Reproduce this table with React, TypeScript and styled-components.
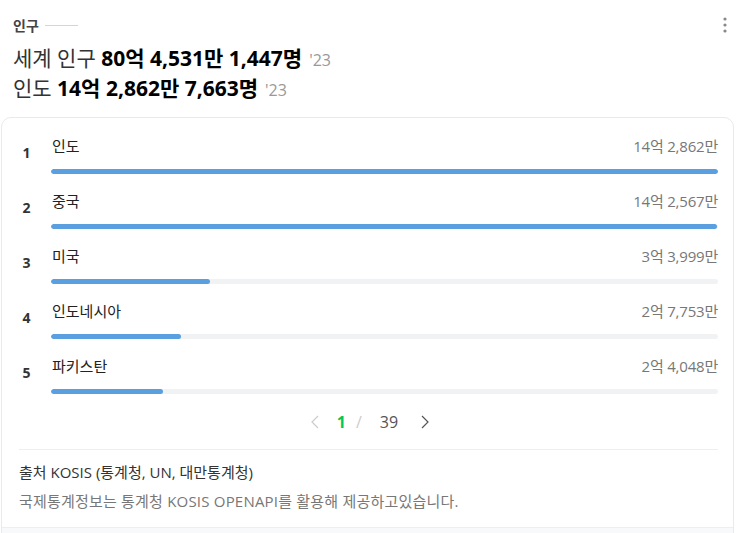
import React from "react";
import styled, { createGlobalStyle } from "styled-components";

const GlobalStyle = createGlobalStyle`
  body {
    margin: 0;
    background: #fff;
    font-family: "Open Sans", "Noto Sans CJK KR", sans-serif;
    color: #222;
  }
`;

const Page = styled.div`
  width: 739px;
  height: 533px;
  overflow: hidden;
  background: #fff;
`;

const Header = styled.div`
  padding: 14px 13px 0 13px;
`;

const TopRow = styled.div`
  display: flex;
  align-items: center;
  justify-content: space-between;
  height: 22px;
`;

const Label = styled.div`
  display: flex;
  align-items: center;
  gap: 6px;
  font-size: 14px;
  font-weight: 700;
  color: #444;

  &::after {
    content: "";
    width: 33px;
    height: 1px;
    background: #d5d5d5;
  }
`;

const MoreButton = styled.button`
  border: 0;
  background: none;
  padding: 0;
  margin-right: -7px;
  width: 16px;
  height: 22px;
  display: flex;
  align-items: center;
  justify-content: center;
`;

const Headline = styled.div`
  margin-top: 7px;
`;

const Line = styled.div`
  display: flex;
  align-items: baseline;
  height: 30px;
  font-size: 21px;
  line-height: 30px;
  color: #333;
  white-space: pre;
`;

const Strong = styled.b`
  font-weight: 700;
  color: #000;
`;

const Year = styled.span`
  font-size: 16px;
  color: #999;
  margin-left: 7px;
`;

const Card = styled.div`
  margin: 14px 0 0 1px;
  width: 733px;
  border: 1px solid #e8eaed;
  border-radius: 10px;
  box-sizing: border-box;
  overflow: hidden;
`;

const List = styled.ol`
  list-style: none;
  margin: 0;
  padding: 18px 15px 0 0;
  display: flex;
  flex-direction: column;
  gap: 17px;
`;

const Row = styled.li`
  display: grid;
  grid-template-columns: 49px 1fr;
`;

const Rank = styled.div`
  text-align: center;
  font-size: 14px;
  font-weight: 700;
  color: #333;
  line-height: 20px;
  padding-top: 7px;
`;

const Info = styled.div`
  display: flex;
  justify-content: space-between;
  font-size: 15px;
  line-height: 20px;
  padding-left: 1px;
`;

const Name = styled.span`
  color: #222;
`;

const Value = styled.span`
  color: #777;
  letter-spacing: -0.2px;
`;

const Track = styled.div`
  margin-top: 13px;
  height: 5px;
  border-radius: 3px;
  background: #f1f2f3;
  overflow: hidden;
`;

const Fill = styled.div`
  height: 100%;
  border-radius: 3px;
  background: #5aa0e1;
`;

const Pager = styled.div`
  margin-top: 16px;
  padding-left: 5px;
  display: flex;
  align-items: center;
  justify-content: center;
  height: 24px;
  font-size: 16px;
`;

const Arrow = styled.button<{ $off?: boolean }>`
  border: 0;
  background: none;
  padding: 0;
  display: flex;
  color: ${(p) => (p.$off ? "#ccc" : "#555")};
`;

const Current = styled.span`
  font-weight: 700;
  color: #03c75a;
  margin-left: 18px;
`;

const Slash = styled.span`
  color: #ccc;
  margin: 0 18px 0 10px;
`;

const Total = styled.span`
  color: #555;
  margin-right: 23px;
`;

const Divider = styled.hr`
  margin: 15px 15px 0 17px;
  border: 0;
  border-top: 1px solid #eceef0;
`;

const Source = styled.div`
  padding: 12px 17px 16px;
  display: flex;
  flex-direction: column;
  gap: 9px;
  font-size: 15px;
  line-height: 20px;
`;

const SourceTitle = styled.div`
  color: #333;
`;

const SourceNote = styled.div`
  color: #777;
  letter-spacing: 0.2px;
`;

const Bottom = styled.div`
  height: 20px;
  border-top: 1px solid #eceef0;
  background: #f8f9fa;
`;

const data = [
  { name: "인도", value: 142862, label: "14억 2,862만" },
  { name: "중국", value: 142567, label: "14억 2,567만" },
  { name: "미국", value: 33999, label: "3억 3,999만" },
  { name: "인도네시아", value: 27753, label: "2억 7,753만" },
  { name: "파키스탄", value: 24048, label: "2억 4,048만" },
];

const max = data[0].value;

const App = () => {
  return (
    <Page>
      <GlobalStyle />
      <Header>
        <TopRow>
          <Label>인구</Label>
          <MoreButton aria-label="더보기">
            <svg width="4" height="16" viewBox="0 0 4 16">
              <circle cx="2" cy="2" r="1.6" fill="#888" />
              <circle cx="2" cy="8" r="1.6" fill="#888" />
              <circle cx="2" cy="14" r="1.6" fill="#888" />
            </svg>
          </MoreButton>
        </TopRow>
        <Headline>
          <Line>
            <span>세계 인구 </span>
            <Strong>80억 4,531만 1,447명</Strong>
            <Year>'23</Year>
          </Line>
          <Line>
            <span>인도 </span>
            <Strong>14억 2,862만 7,663명</Strong>
            <Year>'23</Year>
          </Line>
        </Headline>
      </Header>
      <Card>
        <List>
          {data.map((d, i) => (
            <Row key={d.name}>
              <Rank>{i + 1}</Rank>
              <div>
                <Info>
                  <Name>{d.name}</Name>
                  <Value>{d.label}</Value>
                </Info>
                <Track>
                  <Fill style={{ width: `${(d.value / max) * 100}%` }} />
                </Track>
              </div>
            </Row>
          ))}
        </List>
        <Pager>
          <Arrow $off aria-label="이전">
            <svg width="8" height="14" viewBox="0 0 8 14">
              <path d="M7 1L1 7l6 6" fill="none" stroke="currentColor" strokeWidth="1.2" />
            </svg>
          </Arrow>
          <Current>1</Current>
          <Slash>/</Slash>
          <Total>39</Total>
          <Arrow aria-label="다음">
            <svg width="8" height="14" viewBox="0 0 8 14">
              <path d="M1 1l6 6-6 6" fill="none" stroke="currentColor" strokeWidth="1.2" />
            </svg>
          </Arrow>
        </Pager>
        <Divider />
        <Source>
          <SourceTitle>출처 KOSIS (통계청, UN, 대만통계청)</SourceTitle>
          <SourceNote>국제통계정보는 통계청 KOSIS OPENAPI를 활용해 제공하고있습니다.</SourceNote>
        </Source>
        <Bottom />
      </Card>
    </Page>
  );
};

export default App;
